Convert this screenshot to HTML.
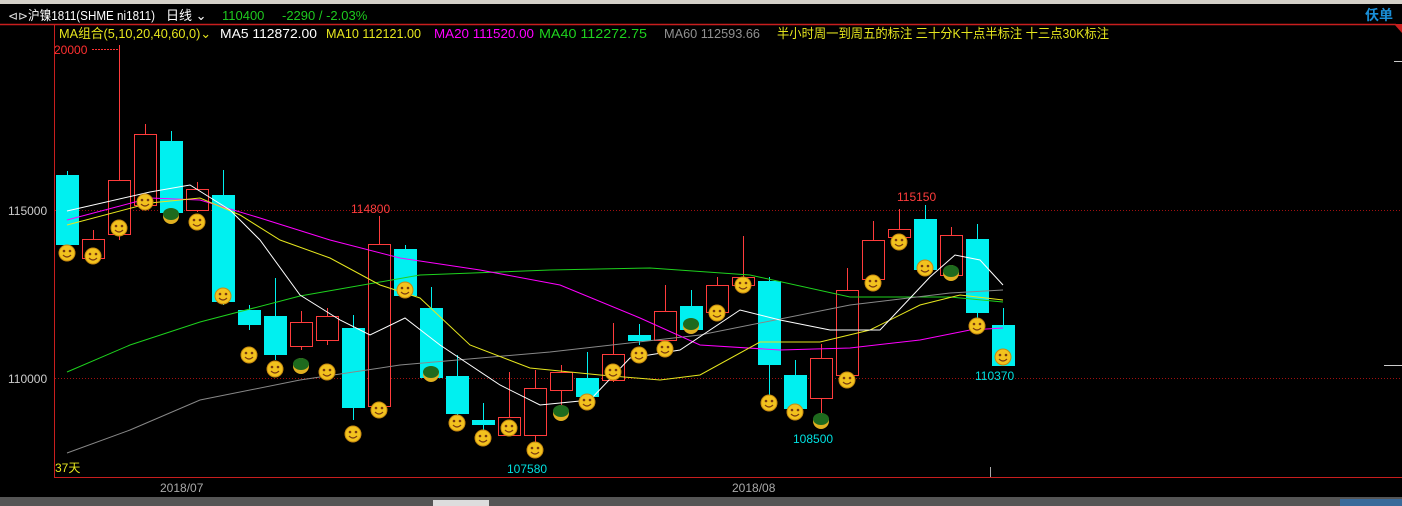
<!DOCTYPE html>
<html><head><meta charset="utf-8"><style>
html,body{margin:0;padding:0;background:#000;width:1402px;height:506px;overflow:hidden}
svg{display:block}
text{font-family:"Liberation Sans","Noto Sans CJK SC",sans-serif}
</style></head><body>
<svg width="1402" height="506" viewBox="0 0 1402 506" xmlns="http://www.w3.org/2000/svg">
<rect width="1402" height="506" fill="#000"/>
<rect x="0" y="0" width="1402" height="4" fill="#d4d0c8"/>
<rect x="0" y="497" width="1402" height="9" fill="#555"/>
<rect x="433" y="500" width="56" height="6" fill="#ddd"/>
<rect x="1340" y="499" width="62" height="7" fill="#3a6a9a"/>
<!-- header -->
<text x="8" y="20" font-size="12" fill="#ddd">⊲⊳</text>
<text x="28" y="20" font-size="13" fill="#fff" textLength="127" lengthAdjust="spacingAndGlyphs">沪镍1811(SHME ni1811)</text>
<text x="166" y="20" font-size="13" fill="#fff">日线 ⌄</text>
<text x="222" y="20" font-size="13" fill="#1ec81e">110400</text>
<text x="282" y="20" font-size="13" fill="#1ec81e">-2290 / -2.03%</text>
<text x="1365" y="20" font-size="14" fill="#1a8fd8" font-weight="bold">仸单</text>
<line x1="0" y1="24.5" x2="1396" y2="24.5" stroke="#c81e1e" stroke-width="1.5"/>
<polygon points="1394,24 1402,24 1402,33" fill="#c81e1e"/>
<line x1="1394" y1="61.5" x2="1402" y2="61.5" stroke="#ccc"/>
<line x1="1384" y1="365.5" x2="1402" y2="365.5" stroke="#ccc"/>
<!-- chart frame -->
<line x1="54.5" y1="24" x2="54.5" y2="477" stroke="#c81e1e"/>
<line x1="54" y1="477.5" x2="1402" y2="477.5" stroke="#c81e1e"/>
<line x1="990.5" y1="467" x2="990.5" y2="477" stroke="#aaa"/>
<!-- legend -->
<g font-size="13">
<text x="59" y="38" fill="#e6e61e" textLength="152" lengthAdjust="spacingAndGlyphs">MA组合(5,10,20,40,60,0)⌄</text>
<text x="220" y="38" fill="#fff" textLength="97" lengthAdjust="spacingAndGlyphs">MA5 112872.00</text>
<text x="326" y="38" fill="#e6e61e" textLength="95" lengthAdjust="spacingAndGlyphs">MA10 112121.00</text>
<text x="434" y="38" fill="#ff00ff" textLength="100" lengthAdjust="spacingAndGlyphs">MA20 111520.00</text>
<text x="539" y="38" fill="#1ed21e" textLength="108" lengthAdjust="spacingAndGlyphs">MA40 112272.75</text>
<text x="664" y="38" fill="#909090" textLength="96" lengthAdjust="spacingAndGlyphs">MA60 112593.66</text>
<text x="777" y="38" fill="#e6e61e" textLength="332" lengthAdjust="spacingAndGlyphs">半小时周一到周五的标注  三十分K十点半标注  十三点30K标注</text>
<text x="54" y="54" font-size="12" fill="#ff3030">20000</text>
</g>
<line x1="92" y1="49.5" x2="118" y2="49.5" stroke="#ff3030" stroke-dasharray="2,1"/>
<!-- grid -->
<line x1="55" y1="210.5" x2="1402" y2="210.5" stroke="#a01010" stroke-dasharray="1,2"/>
<line x1="55" y1="378.5" x2="1402" y2="378.5" stroke="#a01010" stroke-dasharray="1,2"/>
<text x="8" y="215" font-size="12" fill="#ccc">115000</text>
<text x="8" y="383" font-size="12" fill="#ccc">110000</text>
<!-- wicks -->
<g stroke-width="1">
<g stroke="#00f0f0">
<line x1="67.5" y1="171" x2="67.5" y2="250"/><line x1="171.5" y1="131" x2="171.5" y2="215"/>
<line x1="223.5" y1="170" x2="223.5" y2="305"/><line x1="249.5" y1="305" x2="249.5" y2="330"/>
<line x1="275.5" y1="278" x2="275.5" y2="360"/><line x1="353.5" y1="315" x2="353.5" y2="420"/>
<line x1="405.5" y1="245" x2="405.5" y2="298"/><line x1="431.5" y1="287" x2="431.5" y2="380"/>
<line x1="457.5" y1="355" x2="457.5" y2="418"/><line x1="483.5" y1="403" x2="483.5" y2="430"/>
<line x1="587.5" y1="352" x2="587.5" y2="400"/><line x1="639.5" y1="324" x2="639.5" y2="345"/>
<line x1="691.5" y1="290" x2="691.5" y2="332"/><line x1="769.5" y1="277" x2="769.5" y2="395"/>
<line x1="795.5" y1="360" x2="795.5" y2="410"/><line x1="925.5" y1="205" x2="925.5" y2="270"/>
<line x1="977.5" y1="224" x2="977.5" y2="320"/><line x1="1003.5" y1="308" x2="1003.5" y2="366"/>
</g>
<g stroke="#ff3c3c">
<line x1="93.5" y1="230" x2="93.5" y2="260"/><line x1="119.5" y1="45" x2="119.5" y2="240"/>
<line x1="145.5" y1="124" x2="145.5" y2="210"/><line x1="197.5" y1="182" x2="197.5" y2="212"/>
<line x1="301.5" y1="311" x2="301.5" y2="350"/><line x1="327.5" y1="308" x2="327.5" y2="345"/>
<line x1="379.5" y1="216" x2="379.5" y2="410"/><line x1="509.5" y1="372" x2="509.5" y2="436"/>
<line x1="535.5" y1="370" x2="535.5" y2="455"/><line x1="561.5" y1="365" x2="561.5" y2="405"/>
<line x1="613.5" y1="323" x2="613.5" y2="382"/><line x1="665.5" y1="285" x2="665.5" y2="345"/>
<line x1="717.5" y1="277" x2="717.5" y2="315"/><line x1="743.5" y1="236" x2="743.5" y2="290"/>
<line x1="821.5" y1="344" x2="821.5" y2="420"/><line x1="847.5" y1="268" x2="847.5" y2="378"/>
<line x1="873.5" y1="221" x2="873.5" y2="280"/><line x1="899.5" y1="209" x2="899.5" y2="238"/>
<line x1="951.5" y1="227" x2="951.5" y2="278"/>
</g>
</g>
<!-- bodies -->
<g fill="#00f0f0">
<rect x="56" y="175" width="23" height="70"/><rect x="160" y="141" width="23" height="72"/>
<rect x="212" y="195" width="23" height="107"/><rect x="238" y="310" width="23" height="15"/>
<rect x="264" y="316" width="23" height="39"/><rect x="342" y="328" width="23" height="80"/>
<rect x="394" y="249" width="23" height="47"/><rect x="420" y="308" width="23" height="70"/>
<rect x="446" y="376" width="23" height="38"/><rect x="472" y="420" width="23" height="5"/>
<rect x="576" y="378" width="23" height="19"/><rect x="628" y="335" width="23" height="6"/>
<rect x="680" y="306" width="23" height="24"/><rect x="758" y="281" width="23" height="84"/>
<rect x="784" y="375" width="23" height="34"/><rect x="914" y="219" width="23" height="51"/>
<rect x="966" y="239" width="23" height="74"/><rect x="992" y="325" width="23" height="41"/>
</g>
<g fill="#000" stroke="#ff3c3c" stroke-width="1">
<rect x="82.5" y="239.5" width="22" height="19"/><rect x="108.5" y="180.5" width="22" height="54"/>
<rect x="134.5" y="134.5" width="22" height="71"/><rect x="186.5" y="189.5" width="22" height="21"/>
<rect x="290.5" y="322.5" width="22" height="24"/><rect x="316.5" y="316.5" width="22" height="24"/>
<rect x="368.5" y="244.5" width="22" height="162"/><rect x="498.5" y="417.5" width="22" height="18"/>
<rect x="524.5" y="388.5" width="22" height="47"/><rect x="550.5" y="372.5" width="22" height="18"/>
<rect x="602.5" y="354.5" width="22" height="26"/><rect x="654.5" y="311.5" width="22" height="29"/>
<rect x="706.5" y="285.5" width="22" height="27"/><rect x="732.5" y="277.5" width="22" height="8"/>
<rect x="810.5" y="358.5" width="22" height="40"/><rect x="836.5" y="290.5" width="22" height="85"/>
<rect x="862.5" y="240.5" width="22" height="39"/><rect x="888.5" y="229.5" width="22" height="8"/>
<rect x="940.5" y="235.5" width="22" height="40"/>
</g>
<!-- MA lines -->
<g fill="none" stroke-width="1">
<polyline stroke="#1ed21e" points="67,372 130,345 200,322 300,296 420,275 550,270 650,268 750,275 850,297 950,297 1003,302"/>
<polyline stroke="#888" points="67,453 130,430 200,400 300,380 400,365 550,352 700,335 850,305 950,293 1003,290"/>
<polyline stroke="#ff00ff" points="67,220 150,198 200,200 260,218 330,240 400,258 480,270 560,285 640,318 700,345 780,350 850,348 920,340 970,330 1003,328"/>
<polyline stroke="#e6e61e" points="67,225 150,203 200,198 240,215 280,240 330,258 380,285 420,298 470,345 530,368 600,375 660,380 700,375 760,342 820,342 870,330 920,305 960,295 1003,300"/>
<polyline stroke="#fff" points="67,211 150,192 190,185 230,210 260,240 300,295 340,320 370,335 405,318 440,345 500,385 540,405 590,400 630,358 680,350 740,310 780,320 830,330 880,330 930,277 955,255 980,260 1003,285"/>
</g>
<!-- markers -->
<defs>
<g id="s"><circle r="8" fill="#f2c21e" stroke="#c88a10" stroke-width="1"/><circle cx="-3" cy="-2" r="1.3" fill="#7a3a10"/><circle cx="3" cy="-2" r="1.3" fill="#7a3a10"/><path d="M-4 2 Q0 6 4 2" stroke="#7a3a10" fill="none" stroke-width="1.2"/></g>
<g id="t"><circle r="8" fill="#e0b020"/><ellipse cy="-2" rx="8" ry="6" fill="#1e6a1e"/></g>
</defs>
<use href="#s" x="67" y="253"/><use href="#s" x="93" y="256"/><use href="#s" x="119" y="228"/>
<use href="#s" x="145" y="202"/><use href="#t" x="171" y="216"/><use href="#s" x="197" y="222"/>
<use href="#s" x="223" y="296"/><use href="#s" x="249" y="355"/><use href="#s" x="275" y="369"/>
<use href="#t" x="301" y="366"/><use href="#s" x="327" y="372"/><use href="#s" x="353" y="434"/>
<use href="#s" x="379" y="410"/><use href="#s" x="405" y="290"/><use href="#t" x="431" y="374"/>
<use href="#s" x="457" y="423"/><use href="#s" x="483" y="438"/><use href="#s" x="509" y="428"/>
<use href="#s" x="535" y="450"/><use href="#t" x="561" y="413"/><use href="#s" x="587" y="402"/>
<use href="#s" x="613" y="372"/><use href="#s" x="639" y="355"/><use href="#s" x="665" y="349"/>
<use href="#t" x="691" y="326"/><use href="#s" x="717" y="313"/><use href="#s" x="743" y="285"/>
<use href="#s" x="769" y="403"/><use href="#s" x="795" y="412"/><use href="#t" x="821" y="421"/>
<use href="#s" x="847" y="380"/><use href="#s" x="873" y="283"/><use href="#s" x="899" y="242"/>
<use href="#s" x="925" y="268"/><use href="#t" x="951" y="273"/><use href="#s" x="977" y="326"/>
<use href="#s" x="1003" y="357"/>
<!-- labels -->
<g font-size="12">
<text x="351" y="213" fill="#ff3c3c">114800</text>
<text x="897" y="201" fill="#ff3c3c">115150</text>
<text x="507" y="473" fill="#00e0e0">107580</text>
<text x="793" y="443" fill="#00e0e0">108500</text>
<text x="975" y="380" fill="#00e0e0">110370</text>
<text x="55" y="472" fill="#e6e61e">37天</text>
<text x="160" y="492" fill="#aaa">2018/07</text>
<text x="732" y="492" fill="#aaa">2018/08</text>
</g>
</svg>
</body></html>
